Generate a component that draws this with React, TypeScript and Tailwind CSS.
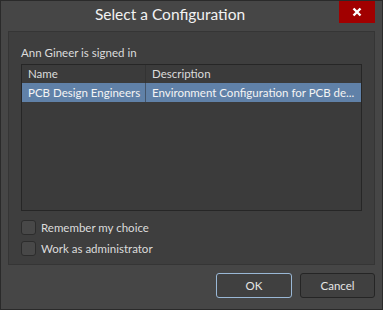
export default function App() {
  return (
    <div
      className="flex h-[310px] w-[383px] flex-col border border-[#2a2a2a] bg-[#464646] text-[11.5px] text-[#dcdcdc]"
      style={{ fontFamily: 'Lato, "Noto Sans", sans-serif' }}
    >
      <div className="flex h-[30px] shrink-0">
        <div className="flex flex-1 items-center justify-center pb-[2px] text-[15.5px] text-[#f2f2f2]">
          Select a Configuration
        </div>
        <button className="mr-[7px] flex h-[22px] w-[36px] items-center justify-center bg-[#a10000]">
          <svg width="10" height="10" viewBox="0 0 10 10">
            <path d="M1.5 1.5 L8.5 8.5 M8.5 1.5 L1.5 8.5" stroke="#ffffff" strokeWidth="2.4" />
          </svg>
        </button>
      </div>

      <div className="mx-[7px] flex h-[234px] flex-col border border-[#353535] bg-[#3e3e3e] px-[12px]">
        <div className="mt-[11px] h-[20px] leading-[20px]">Ann Gineer is signed in</div>

        <div className="mt-[1px] h-[147px] border border-[#262626] bg-[#3b3b3b]">
          <div className="flex h-[18px] leading-[18px]">
            <div className="w-[124px] whitespace-nowrap border-r border-[#333333] pl-[6px]">Name</div>
            <div className="flex-1 pl-[6px]">Description</div>
          </div>
          <div className="flex h-[19px] bg-[#6081a8] leading-[19px] text-[#f4f4f4]">
            <div className="w-[124px] whitespace-nowrap border-r border-[#44556b] pl-[6px]">PCB Design Engineers</div>
            <div className="min-w-0 flex-1 whitespace-nowrap pl-[6px]">Environment Configuration for PCB de...</div>
          </div>
        </div>

        <div className="mt-[9px] flex flex-col gap-[6px]">
          <label className="flex h-[15px] items-center gap-[5px]">
            <span className="h-[15px] w-[15px] rounded-[3px] border border-[#2c2c2c] bg-[#484848]" />
            <span>Remember my choice</span>
          </label>
          <label className="flex h-[15px] items-center gap-[5px]">
            <span className="h-[15px] w-[15px] rounded-[3px] border border-[#2c2c2c] bg-[#484848]" />
            <span>Work as administrator</span>
          </label>
        </div>
      </div>

      <div className="mt-[8px] flex justify-end gap-[8px] pr-[7px]">
        <button className="h-[25px] w-[76px] rounded-[3px] border border-[#9ab8d6] bg-[#404040] text-[11.5px] text-[#e6e6e6]">
          OK
        </button>
        <button className="h-[25px] w-[75px] rounded-[3px] border border-[#252525] bg-[#404040] text-[11.5px] text-[#e6e6e6]">
          Cancel
        </button>
      </div>
    </div>
  );
}
